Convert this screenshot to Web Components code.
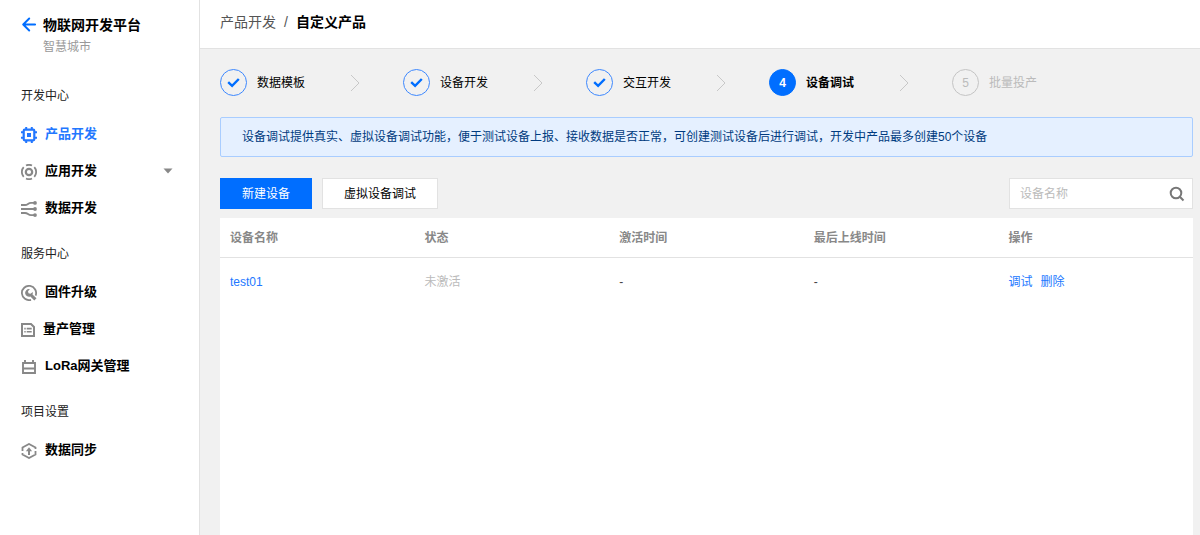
<!DOCTYPE html>
<html lang="zh-CN">
<head>
<meta charset="utf-8">
<meta name="viewport" content="width=device-width, initial-scale=1">
<title>物联网开发平台</title>
<style>
  :root {
    --blue: #006eff;
    --link: #2277ff;
    --grey: #888;
    --line: #e2e2e2;
  }
  body {
    margin: 0;
    background: #f1f1f1;
    color: #000;
    font: 12px/18px "Liberation Sans", "Noto Sans CJK SC", sans-serif;
  }
</style>
</head>
<body>
<iot-app></iot-app>

<template id="nav-item">
  <style>
    :host { display: block; color: #000; --icon: #888; }
    :host([active]) { color: var(--link); --icon: var(--link); }
    a { display: flex; align-items: center; gap: 8px; height: 37px; padding: 0 26px 0 21px; color: inherit; text-decoration: none; font-size: 13px; line-height: 20px; font-weight: 700; }
    ::slotted(svg) { display: block; color: var(--icon); margin-top: 2px; }
    .caret { display: none; margin-left: auto; color: var(--grey); }
    :host([expandable]) .caret { display: block; }
  </style>
  <a href="#"><slot name="icon"></slot><slot></slot>
    <svg class="caret" width="10" height="6" viewBox="0 0 10 6" aria-hidden="true"><path d="M0.5 0.500h9L5 5.500z" fill="currentColor"/></svg></a>
</template>

<template id="nav-section">
  <style>
    :host { display: block; margin-bottom: 9px; }
    h2 { margin: 0; padding-left: 21px; font-size: 12px; line-height: 38px; font-weight: 400; color: #222; }
  </style>
  <h2></h2>
  <slot></slot>
</template>

<template id="side-bar">
  <style>
    :host { display: block; box-sizing: border-box; background: #fff; border-right: 1px solid var(--line); }
    header { display: flex; gap: 7px; padding: 15px 0 21px 22px; }
    .back { display: block; color: var(--blue); margin-top: 2px; }
    .back svg { display: block; }
    h1 { margin: 0; font-size: 14px; line-height: 20px; font-weight: 700; }
    p { margin: 3px 0 0; color: #999; }
  </style>
  <header>
    <a class="back" href="#" aria-label="返回">
      <svg width="14" height="15" viewBox="0 0 14 15" fill="none" stroke="currentColor" stroke-width="1.900" stroke-linecap="round" stroke-linejoin="round"><path d="M7.200 1.500L1.200 7.500l6 6M1.500 7.500H13.200"/></svg>
    </a>
    <div><h1>物联网开发平台</h1><p>智慧城市</p></div>
  </header>
  <nav>
    <nav-section heading="开发中心">
      <nav-item active>
        <svg slot="icon" width="16" height="16" viewBox="0 0 16 16" fill="none" stroke="currentColor" aria-hidden="true"><rect x="2.700" y="2.700" width="10.600" height="10.600" rx="1" stroke-width="2.200"/><path d="M5.200 0v2.500M10.800 0v2.500M5.200 13.500V16M10.800 13.500V16M0 5.200h2.500M0 10.800h2.500M13.500 5.200H16M13.500 10.800H16" stroke-width="2"/><rect x="6" y="6" width="4" height="4" fill="currentColor" stroke="none"/></svg>
        产品开发
      </nav-item>
      <nav-item expandable>
        <svg slot="icon" width="16" height="16" viewBox="0 0 16 16" fill="none" stroke="currentColor" stroke-width="1.800" aria-hidden="true"><circle cx="8" cy="8" r="3.200" stroke-width="2.200"/><path d="M5 1.500a7.200 7.200 0 0 1 6 0M5 14.500a7.200 7.200 0 0 0 6 0M2.700 3.200a7.100 7.100 0 0 0 0 9.600M13.300 3.200a7.100 7.100 0 0 1 0 9.600"/></svg>
        应用开发
      </nav-item>
      <nav-item>
        <svg slot="icon" width="16" height="16" viewBox="0 0 16 16" fill="none" stroke="currentColor" stroke-width="1.900" aria-hidden="true"><path d="M0 4h4C7 4 7 1.900 10 1.900h4M0 8h14M0 12h4c3 0 3 2.100 6 2.100h4"/><g fill="currentColor" stroke="none"><circle cx="14" cy="1.900" r="1.900"/><circle cx="14" cy="8" r="1.900"/><circle cx="14" cy="14.100" r="1.900"/></g></svg>
        数据开发
      </nav-item>
    </nav-section>
    <nav-section heading="服务中心">
      <nav-item>
        <svg slot="icon" width="16" height="16" viewBox="0 0 16 16" fill="none" stroke="currentColor" aria-hidden="true"><path d="M10 14.800A7.100 7.100 0 1 1 14.600 10.600" stroke-width="1.800"/><path d="M4.200 8.800A3.900 3.900 0 0 1 8.900 4.100L7 6.300l.5 2 2 .5 2.200-1.900a3.900 3.900 0 0 1-.2 2.500l4 3.900-2.200 2.200-3.900-4a3.900 3.900 0 0 1-5.200-2.700z" fill="currentColor" stroke="none"/></svg>
        固件升级
      </nav-item>
      <nav-item>
        <svg slot="icon" width="14" height="14" viewBox="0 0 14 14" fill="none" stroke="currentColor" aria-hidden="true"><path d="M1 1h9l3 3v9H1z" stroke-width="2"/><path d="M3.300 5.600h1.400M5.700 5.600h5M3.300 8.700h1.400M5.700 8.700h5" stroke-width="1.600"/></svg>
        量产管理
      </nav-item>
      <nav-item>
        <svg slot="icon" width="16" height="16" viewBox="0 0 16 16" fill="none" stroke="currentColor" stroke-width="1.900" aria-hidden="true"><path d="M2 4h12v10H2zM2 9.500h12M4 1v3M12 1v3"/></svg>
        LoRa网关管理
      </nav-item>
    </nav-section>
    <nav-section heading="项目设置">
      <nav-item>
        <svg slot="icon" width="16" height="16" viewBox="0 0 16 16" fill="none" stroke="currentColor" stroke-width="1.800" aria-hidden="true"><path d="M1.500 8V4.500L8 1l6.500 3.500V6M14.500 8v3.500L8 15l-6.500-3.500V10"/><path d="M8 12V7" stroke-width="2"/><path d="M4.900 8.200L8 4.300l3.100 3.900z" fill="currentColor" stroke="none"/></svg>
        数据同步
      </nav-item>
    </nav-section>
  </nav>
</template>

<template id="page-header">
  <style>
    :host { display: flex; align-items: center; box-sizing: border-box; height: 49px; padding: 0 20px 4px; background: #fff; border-bottom: 1px solid var(--line); font-size: 14px; line-height: 20px; }
    nav { display: flex; gap: 8px; color: #555; }
    a { color: inherit; text-decoration: none; }
    strong { color: #000; }
  </style>
  <nav aria-label="路径"><a href="#">产品开发</a><span>/</span><strong>自定义产品</strong></nav>
</template>

<template id="step-item">
  <style>
    :host { display: flex; align-items: center; flex: 0 0 183px; box-sizing: border-box; padding-right: 43px; color: #000; }
    .dot { display: flex; align-items: center; justify-content: center; box-sizing: border-box; width: 27px; height: 27px; margin-right: 10px; border: 1px solid #3d88ff; border-radius: 50%; color: var(--blue); }
    .chevron { margin-left: auto; }
    .num { display: none; }
    :host([state="current"]) { font-weight: 700; }
    :host([state="current"]) .dot { background: var(--blue); border-color: var(--blue); color: #fff; }
    :host([state="todo"]) { color: #bbb; }
    :host([state="todo"]) .dot { border-color: #c4c4c4; color: #bbb; }
    :host([state]) .tick, :host([state="todo"]) .chevron { display: none; }
    :host([state]) .num { display: inline; }
  </style>
  <span class="dot"><svg class="tick" width="13" height="11" viewBox="0 0 13 11" fill="none" stroke="currentColor" stroke-width="2.400" aria-hidden="true"><path d="M1.200 5.200l3.900 3.700L11.800 2"/></svg><span class="num"></span></span>
  <slot></slot>
  <svg class="chevron" width="10" height="18" viewBox="0 0 10 18" fill="none" stroke="#c8c8c8" aria-hidden="true"><path d="M1 1l8 8-8 8"/></svg>
</template>

<template id="notice-bar">
  <style>
    :host { display: block; padding: 10px 21px; background: #e5f0ff; border: 1px solid #a9cdff; border-radius: 2px; color: #003b80; }
  </style>
  <slot></slot>
</template>

<template id="tool-bar">
  <style>
    :host { display: flex; align-items: center; gap: 10px; }
    button { box-sizing: border-box; height: 31px; padding: 0 20px; border: 1px solid var(--line); background: #fff; color: #000; font: inherit; min-width: 92px; cursor: pointer; }
    .wide { min-width: 116px; }
    .primary { background: var(--blue); border-color: var(--blue); color: #fff; }
    form { display: flex; align-items: center; box-sizing: border-box; width: 184px; height: 31px; margin-left: auto; background: #fff; border: 1px solid var(--line); }
    input { flex: 1; min-width: 0; padding: 0 10px; border: 0; outline: 0; background: none; font: inherit; color: #000; }
    input::placeholder { color: #bbb; }
    .find { min-width: 0; height: auto; padding: 0 7px; border: 0; background: none; color: #777; }
    .find svg { display: block; }
  </style>
  <button class="primary" type="button">新建设备</button>
  <button class="wide" type="button">虚拟设备调试</button>
  <form role="search">
    <input type="text" placeholder="设备名称" aria-label="设备名称">
    <button class="find" type="button" aria-label="搜索"><svg width="16" height="16" viewBox="0 0 16 16" fill="none" stroke="currentColor" stroke-width="2"><circle cx="7" cy="7" r="5.300"/><path d="M10.800 10.800l3.700 3.700"/></svg></button>
  </form>
</template>

<template id="device-table">
  <style>
    :host { display: block; background: #fff; }
    table { width: 100%; table-layout: fixed; border-collapse: collapse; }
    th, td { padding: 0 10px; text-align: left; }
    th { height: 39px; color: #888; font-weight: 700; border-bottom: 1px solid var(--line); }
    td { height: 47px; color: #444; }
    .off { color: #bbb; }
    a { color: var(--link); text-decoration: none; margin-right: 8px; }
  </style>
  <table>
    <thead><tr><th scope="col">设备名称</th><th scope="col">状态</th><th scope="col">激活时间</th><th scope="col">最后上线时间</th><th scope="col">操作</th></tr></thead>
    <tbody><tr><td><a href="#">test01</a></td><td class="off">未激活</td><td>-</td><td>-</td><td><a href="#">调试</a><a href="#">删除</a></td></tr></tbody>
  </table>
</template>

<template id="iot-app">
  <style>
    :host { display: grid; grid-template-columns: 200px minmax(0, 1fr); min-height: 100vh; }
    .page { display: flex; flex-direction: column; }
    main { flex: 1; display: flex; flex-direction: column; padding: 20px 7px 0 20px; }
    .steps { display: flex; }
    notice-bar { margin-top: 21px; }
    tool-bar { margin: 21px 0 9px; }
    device-table { flex: 1; }
  </style>
  <side-bar></side-bar>
  <div class="page">
    <page-header></page-header>
    <main>
      <div class="steps">
        <step-item>数据模板</step-item>
        <step-item>设备开发</step-item>
        <step-item>交互开发</step-item>
        <step-item state="current" number="4">设备调试</step-item>
        <step-item state="todo" number="5">批量投产</step-item>
      </div>
      <notice-bar>设备调试提供真实、虚拟设备调试功能，便于测试设备上报、接收数据是否正常，可创建测试设备后进行调试，开发中产品最多创建50个设备</notice-bar>
      <tool-bar></tool-bar>
      <device-table></device-table>
    </main>
  </div>
</template>

<script>
  class TemplateElement extends HTMLElement {
    constructor() {
      super();
      const template = document.getElementById(this.localName);
      this.attachShadow({ mode: "open" }).append(document.importNode(template.content, true));
    }
  }

  class NavSection extends TemplateElement {
    connectedCallback() {
      this.shadowRoot.querySelector("h2").textContent = this.getAttribute("heading");
    }
  }

  class StepItem extends TemplateElement {
    connectedCallback() {
      this.shadowRoot.querySelector(".num").textContent = this.getAttribute("number") || "";
    }
  }

  customElements.define("nav-section", NavSection);
  customElements.define("step-item", StepItem);
  for (const name of ["nav-item", "side-bar", "page-header", "notice-bar", "tool-bar", "device-table", "iot-app"]) {
    customElements.define(name, class extends TemplateElement {});
  }
</script>
</body>
</html>
